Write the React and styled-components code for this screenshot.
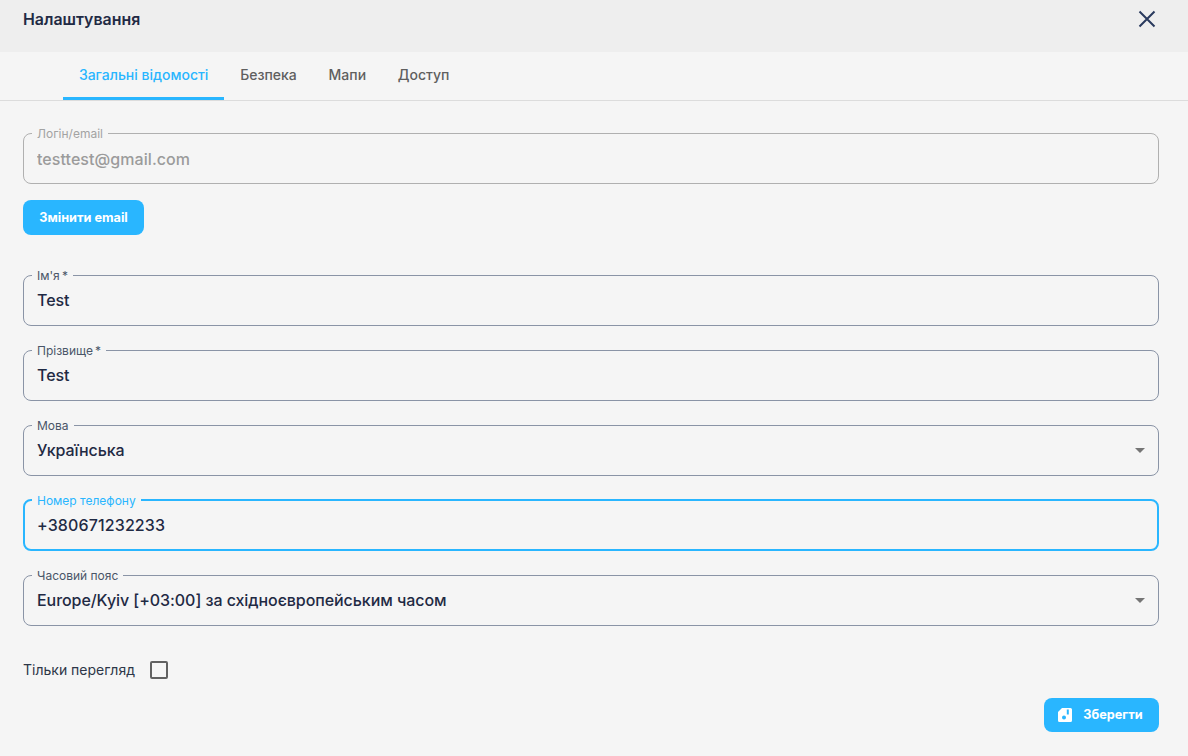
import React from 'react';
import styled, {createGlobalStyle} from 'styled-components';

const GlobalStyle = createGlobalStyle`
  html, body {
    margin: 0;
    height: 100%;
    background: #f5f5f5;
    font-family: Inter, "Noto Sans", sans-serif;
    overflow: hidden;
  }
`;

const Page = styled.div`
  width: 1188px;
  height: 756px;
  background: #f5f5f5;
  display: flex;
  flex-direction: column;
`;

const Header = styled.header`
  height: 52px;
  flex: none;
  background: #eeeeee;
  display: flex;
  justify-content: space-between;
  align-items: flex-start;
  padding: 0 32px 0 23px;
  box-sizing: border-box;
`;

const Title = styled.h2`
  margin: 10px 0 0;
  font-size: 15.9px;
  line-height: 20px;
  font-weight: 600;
  color: #1f2a44;
`;

const CloseButton = styled.button`
  margin: 10px 0 0;
  padding: 0;
  width: 18px;
  height: 18px;
  border: 0;
  background: none;
  color: #2a3a5e;
  display: flex;
`;

const Tabs = styled.nav`
  height: 49px;
  flex: none;
  box-sizing: border-box;
  padding-left: 63px;
  display: flex;
  border-bottom: 1px solid #dcdcdc;
`;

const Tab = styled.div`
  height: 48px;
  box-sizing: border-box;
  padding: 0 15.9px;
  display: flex;
  align-items: center;
  font-size: 14px;
  font-weight: 500;
  color: ${p => (p.$active ? '#29b6ff' : '#5f5f5f')};
  border-bottom: 3px solid ${p => (p.$active ? '#29b6ff' : 'transparent')};
`;

const Form = styled.form`
  flex: 1;
  display: flex;
  flex-direction: column;
  padding: 25px 29px 0 23px;
`;

const Field = styled.fieldset`
  margin: 0 0 17px;
  padding: 0 ${p => (p.$focused ? '12px' : '13px')};
  min-width: 0;
  height: 58px;
  box-sizing: border-box;
  border: ${p => (p.$focused ? '2px' : '1px')} solid
    ${p => (p.$focused ? '#29b6ff' : p.$disabled ? '#b0b0b0' : '#8a94a6')};
  border-radius: 8px;
  display: flex;
  align-items: center;
`;

const Legend = styled.legend`
  margin-left: -5px;
  padding: 2px 5px 0;
  font-size: 12px;
  line-height: 12px;
  font-weight: 400;
  color: ${p => (p.$focused ? '#29b6ff' : p.$disabled ? '#a3a3a3' : '#4a5568')};
`;

const Value = styled.input`
  flex: 1;
  min-width: 0;
  margin-top: ${p => (p.$disabled ? '7px' : '6px')};
  padding: 0;
  border: 0;
  outline: 0;
  background: none;
  font: 500 16px/24px Inter, sans-serif;
  letter-spacing: ${p => p.$spacing};
  color: ${p => (p.$disabled ? '#9b9b9b' : '#1f2a44')};
`;

const Arrow = styled.span`
  flex: none;
  margin: 6px 0 0;
  width: 0;
  height: 0;
  border-left: 5px solid transparent;
  border-right: 5px solid transparent;
  border-top: 5px solid #757575;
`;

const Button = styled.button`
  border: 0;
  border-radius: 8px;
  background: #29b6ff;
  color: #fff;
  font: 700 12.7px/16px Inter, sans-serif;
  display: inline-flex;
  align-items: center;
  justify-content: center;
  padding: 0;
`;

const EmailButton = styled(Button)`
  width: 121px;
  height: 35px;
  margin: -1px 0 33px;
  align-self: flex-start;
`;

const CheckRow = styled.label`
  display: flex;
  align-items: center;
  gap: 15px;
  height: 24px;
  margin-top: 15px;
  font-size: 14px;
  font-weight: 400;
  color: #2d3748;
`;

const CheckText = styled.span`
  margin-bottom: 2px;
`;

const Box = styled.span`
  width: 14px;
  height: 14px;
  border: 2px solid #616161;
  border-radius: 2px;
`;

const Footer = styled.div`
  display: flex;
  justify-content: flex-end;
  margin-top: 16px;
`;

const SaveButton = styled(Button)`
  width: 115px;
  height: 34px;
  gap: 11px;
  padding-right: 2px;
`;

const CloseIcon = () => (
  <svg width="18" height="18" viewBox="0 0 18 18" fill="none" stroke="currentColor" strokeWidth="2">
    <path d="M1.5 1.5 16.5 16.5M16.5 1.5 1.5 16.5" />
  </svg>
);

const SaveIcon = () => (
  <svg width="14" height="14" viewBox="0 0 14 14" fill="#fff">
    <path
      fillRule="evenodd"
      d="M4 0H12.5A1.5 1.5 0 0 1 14 1.5V12.5A1.5 1.5 0 0 1 12.5 14H1.5A1.5 1.5 0 0 1 0 12.5V4ZM8.8 1.5V6.5H10.8V1.5ZM6 7.4A2 2 0 1 0 6 11.4 2 2 0 1 0 6 7.4Z"
    />
  </svg>
);

const TextField = ({label, value, focused, disabled, select, spacing = '-0.06px'}) => (
  <Field $focused={focused} $disabled={disabled}>
    <Legend $focused={focused} $disabled={disabled}>
      {label}
    </Legend>
    <Value $disabled={disabled} $spacing={spacing} value={value} readOnly />
    {select && <Arrow />}
  </Field>
);

export default function App() {
  return (
    <Page>
      <GlobalStyle />
      <Header>
        <Title>Налаштування</Title>
        <CloseButton type="button">
          <CloseIcon />
        </CloseButton>
      </Header>
      <Tabs>
        <Tab $active>Загальні відомості</Tab>
        <Tab>Безпека</Tab>
        <Tab>Мапи</Tab>
        <Tab>Доступ</Tab>
      </Tabs>
      <Form>
        <TextField label="Логін/email" value="testtest@gmail.com" disabled spacing="0.06px" />
        <EmailButton type="button">Змінити email</EmailButton>
        <TextField label={'Ім\'я\u2009*'} value="Test" />
        <TextField label={'Прізвище\u2009*'} value="Test" />
        <TextField label="Мова" value="Українська" select />
        <TextField label="Номер телефону" value="+380671232233" focused spacing="0.13px" />
        <TextField label="Часовий пояс" value="Europe/Kyiv [+03:00] за східноєвропейським часом" select />
        <CheckRow>
          <CheckText>Тільки перегляд</CheckText>
          <Box />
        </CheckRow>
        <Footer>
          <SaveButton type="button">
            <SaveIcon />
            Зберегти
          </SaveButton>
        </Footer>
      </Form>
    </Page>
  );
}
